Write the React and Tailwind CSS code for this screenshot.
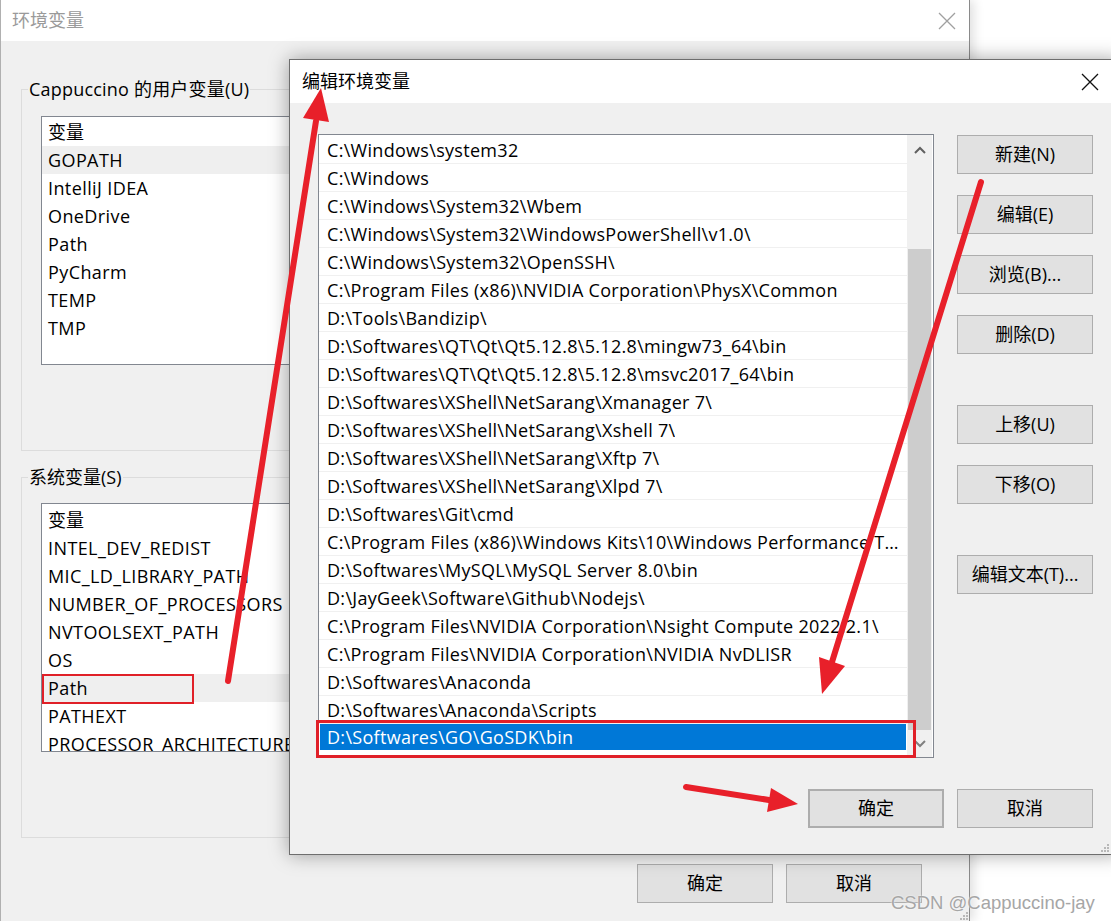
import React from "react";

const userVars = ["GOPATH", "IntelliJ IDEA", "OneDrive", "Path", "PyCharm", "TEMP", "TMP"];
const sysVars = [
  "INTEL_DEV_REDIST",
  "MIC_LD_LIBRARY_PATH",
  "NUMBER_OF_PROCESSORS",
  "NVTOOLSEXT_PATH",
  "OS",
  "Path",
  "PATHEXT",
  "PROCESSOR_ARCHITECTURE",
];
const paths = [
  "C:\\Windows\\system32",
  "C:\\Windows",
  "C:\\Windows\\System32\\Wbem",
  "C:\\Windows\\System32\\WindowsPowerShell\\v1.0\\",
  "C:\\Windows\\System32\\OpenSSH\\",
  "C:\\Program Files (x86)\\NVIDIA Corporation\\PhysX\\Common",
  "D:\\Tools\\Bandizip\\",
  "D:\\Softwares\\QT\\Qt\\Qt5.12.8\\5.12.8\\mingw73_64\\bin",
  "D:\\Softwares\\QT\\Qt\\Qt5.12.8\\5.12.8\\msvc2017_64\\bin",
  "D:\\Softwares\\XShell\\NetSarang\\Xmanager 7\\",
  "D:\\Softwares\\XShell\\NetSarang\\Xshell 7\\",
  "D:\\Softwares\\XShell\\NetSarang\\Xftp 7\\",
  "D:\\Softwares\\XShell\\NetSarang\\Xlpd 7\\",
  "D:\\Softwares\\Git\\cmd",
  "C:\\Program Files (x86)\\Windows Kits\\10\\Windows Performance Toolkit\\",
  "D:\\Softwares\\MySQL\\MySQL Server 8.0\\bin",
  "D:\\JayGeek\\Software\\Github\\Nodejs\\",
  "C:\\Program Files\\NVIDIA Corporation\\Nsight Compute 2022.2.1\\",
  "C:\\Program Files\\NVIDIA Corporation\\NVIDIA NvDLISR",
  "D:\\Softwares\\Anaconda",
  "D:\\Softwares\\Anaconda\\Scripts",
];

function Btn({ children, className = "" }) {
  return (
    <div
      className={`flex h-[39px] w-[136px] items-center justify-center border border-[#adadad] bg-[#e1e1e1] text-[18px] text-black ${className}`}
    >
      {children}
    </div>
  );
}

function CloseX({ color }) {
  return (
    <svg width="18" height="18" viewBox="0 0 18 18">
      <path d="M1 1 L17 17 M17 1 L1 17" stroke={color} strokeWidth="1.3" fill="none" />
    </svg>
  );
}

function Grip() {
  return (
    <svg width="9" height="9" viewBox="0 0 9 9">
      <rect x="7" y="1" width="2" height="2" fill="#b8b8b8" />
      <rect x="4" y="4" width="2" height="2" fill="#b8b8b8" />
      <rect x="7" y="4" width="2" height="2" fill="#b8b8b8" />
      <rect x="1" y="7" width="2" height="2" fill="#b8b8b8" />
      <rect x="4" y="7" width="2" height="2" fill="#b8b8b8" />
      <rect x="7" y="7" width="2" height="2" fill="#b8b8b8" />
    </svg>
  );
}

function VarList({ items, selected, pt }) {
  return (
    <div className={`ml-[19px] h-[249px] w-[880px] overflow-hidden border border-[#828790] bg-white ${pt}`}>
      <div className="flex h-[28px] items-center pl-[6px] pt-[1px] text-[18px]">变量</div>
      {items.map((v, i) => (
        <div
          key={i}
          className={`flex h-[28px] items-center whitespace-nowrap pl-[6px] pt-[1px] text-[18px] tracking-[0.4px] ${
            i === selected ? "bg-[#efefef]" : ""
          }`}
        >
          {v}
        </div>
      ))}
    </div>
  );
}

export default function App() {
  return (
    <div className="relative h-[921px] w-[1111px] overflow-hidden bg-white font-['Open_Sans','Noto_Sans_CJK_SC',sans-serif] text-black">
      {/* Outer window */}
      <div className="flex h-full">
        <div className="flex h-full w-[970px] flex-col border-l border-r border-l-[#b0b0b0] border-r-[#8a8a8a] shadow-[4px_0_10px_rgba(0,0,0,0.12)]">
          <div className="flex h-[41px] items-center justify-between bg-white pl-[11px] pr-[13px]">
            <span className="text-[18px] text-[#9a9a9a]">环境变量</span>
            <CloseX color="#a0a0a0" />
          </div>
          <div className="relative flex flex-1 flex-col bg-[#f0f0f0] pl-[20px] pt-[48px]">
            <div className="relative h-[362px] w-[928px] border border-[#dcdcdc]">
              <span className="absolute left-[6px] top-[-13px] bg-[#f0f0f0] px-[1px] text-[18px] leading-[24px] tracking-[0.2px]">
                Cappuccino 的用户变量(U)
              </span>
              <div className="mt-[26px]">
                <VarList items={userVars} selected={0} pt="pt-[1px]" />
              </div>
            </div>
            <div className="relative mt-[26px] h-[361px] w-[928px] border border-[#dcdcdc]">
              <span className="absolute left-[6px] top-[-13px] bg-[#f0f0f0] px-[1px] text-[18px] leading-[24px]">
                系统变量(S)
              </span>
              <div className="mt-[25px]">
                <VarList items={sysVars} selected={5} pt="pt-[2px]" />
              </div>
            </div>
            <div className="mt-[26px] flex gap-[13px] pl-[616px]">
              <Btn>确定</Btn>
              <Btn>取消</Btn>
            </div>
            <div className="absolute bottom-[1px] right-[1px]">
              <Grip />
            </div>
          </div>
        </div>
      </div>

      {/* Edit dialog */}
      <div className="absolute left-[289px] top-[59px] flex h-[796px] w-[832px] flex-col border border-[#6e6e6e] bg-[#f0f0f0] shadow-[0_0_18px_rgba(0,0,0,0.35)]">
        <div className="flex h-[43px] items-center justify-between bg-white pl-[12px] pr-[21px]">
          <span className="text-[18px]">编辑环境变量</span>
          <CloseX color="#111111" />
        </div>
        <div className="relative flex flex-1 flex-col pl-[28px] pt-[31px]">
          <div className="flex items-start">
            <div className="flex h-[624px] w-[616px] border border-[#828790] bg-white">
              <div className="flex w-[588px] flex-col pt-[1px]">
                {paths.map((p, i) => (
                  <div
                    key={i}
                    className="flex h-[28px] items-center overflow-hidden border-b border-[#f0f0f0] pl-[8px] pt-[1px] text-[18px] tracking-[0.3px]"
                  >
                    <span className="overflow-hidden text-ellipsis whitespace-nowrap">{p}</span>
                  </div>
                ))}
                <div className="h-[28px]">
                  <div className="mx-[1px] flex h-[26px] items-center bg-[#0078d7] pl-[7px] pt-[1px] text-[18px] tracking-[0.3px] text-white">
                    D:\Softwares\GO\GoSDK\bin
                  </div>
                </div>
              </div>
              <div className="flex w-[25px] flex-col bg-[#f0f0f0]">
                <div className="flex h-[30px] items-center justify-center">
                  <svg width="12" height="8" viewBox="0 0 12 8">
                    <path d="M1 7 L6 2 L11 7" stroke="#606060" strokeWidth="2" fill="none" />
                  </svg>
                </div>
                <div className="h-[84px]" />
                <div className="mx-[1px] h-[481px] bg-[#cdcdcd]" />
                <div className="flex flex-1 items-center justify-center">
                  <svg width="12" height="8" viewBox="0 0 12 8">
                    <path d="M1 1 L6 6 L11 1" stroke="#808080" strokeWidth="2" fill="none" />
                  </svg>
                </div>
              </div>
            </div>
            <div className="ml-[23px] mt-[1px] flex flex-col">
              <Btn>新建(N)</Btn>
              <Btn className="mt-[21px]">编辑(E)</Btn>
              <Btn className="mt-[21px]">浏览(B)...</Btn>
              <Btn className="mt-[21px]">删除(D)</Btn>
              <Btn className="mt-[51px]">上移(U)</Btn>
              <Btn className="mt-[21px]">下移(O)</Btn>
              <Btn className="mt-[51px]">编辑文本(T)...</Btn>
            </div>
          </div>
          <div className="mt-[31px] flex gap-[13px] pl-[490px]">
            <Btn className="border-2 border-[#0078d7]">确定</Btn>
            <Btn>取消</Btn>
          </div>
          <div className="absolute bottom-[2px] left-[810px]">
            <Grip />
          </div>
        </div>
      </div>

      {/* Annotations */}
      <svg className="pointer-events-none absolute left-0 top-0" width="1111" height="921" viewBox="0 0 1111 921">
        <g fill="#e8202a" stroke="#e8202a" strokeLinecap="round">
          <line x1="228" y1="681" x2="316" y2="121" strokeWidth="6" />
          <polygon points="321,88 329,122 303,118" stroke="none" />
          <line x1="981" y1="182" x2="832" y2="662" strokeWidth="6" />
          <polygon points="822,694 845,666 819,657" stroke="none" />
          <line x1="686" y1="787" x2="769" y2="800" strokeWidth="6" />
          <polygon points="798,804 767,812 771,788" stroke="none" />
        </g>
        <rect x="43" y="675" width="150" height="28" fill="none" stroke="#e02028" strokeWidth="2" />
        <rect x="317.5" y="721.5" width="597" height="35" fill="none" stroke="#e02028" strokeWidth="3" />
      </svg>

      <div className="absolute left-[891px] top-[889px] font-['Liberation_Sans',sans-serif] text-[18.5px] text-[#a6a6a6] [text-shadow:0_0_2px_#ffffff]">
        CSDN @Cappuccino-jay
      </div>
    </div>
  );
}
